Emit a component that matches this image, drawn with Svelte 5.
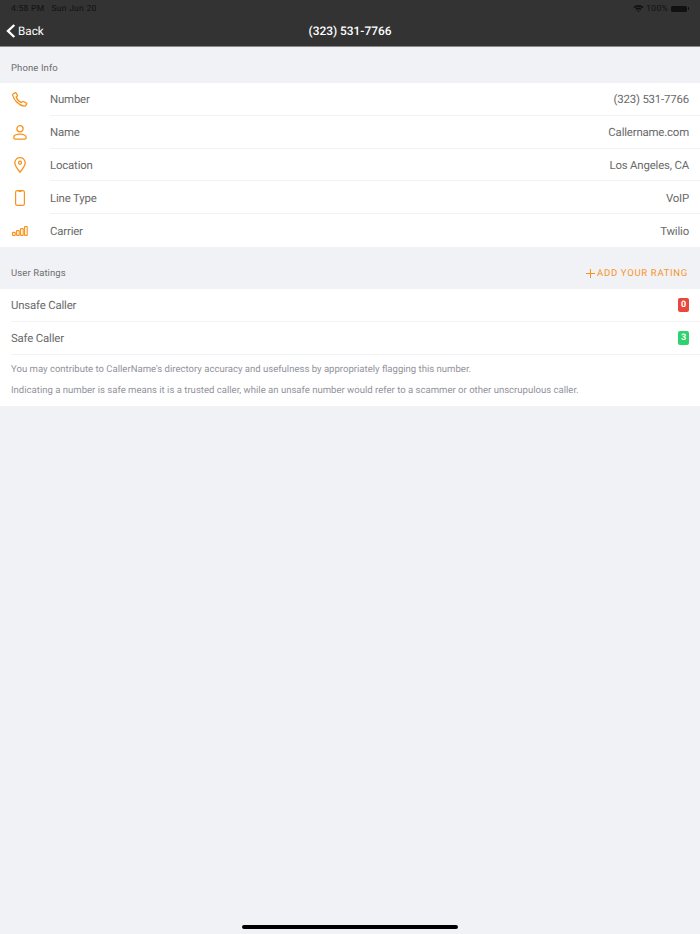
<script>
  const info = [
    { label: 'Number', value: '(323) 531-7766', icon: 'phone' },
    { label: 'Name', value: 'Callername.com', icon: 'user' },
    { label: 'Location', value: 'Los Angeles, CA', icon: 'pin' },
    { label: 'Line Type', value: 'VoIP', icon: 'mobile' },
    { label: 'Carrier', value: 'Twilio', icon: 'bars' }
  ];
  const ratings = [
    { label: 'Unsafe Caller', count: 0, tone: 'red' },
    { label: 'Safe Caller', count: 3, tone: 'green' }
  ];
</script>

<div class="page">
  <header class="nav">
    <div class="status">
      <span class="time">4:58 PM</span>
      <span class="date">Sun Jun 20</span>
      <span class="right">
        <svg class="wifi" width="11" height="9" viewBox="0 0 11 9">
          <path d="M0.4 3 A7.4 7.4 0 0 1 10.6 3 L9.4 4.2 A5.7 5.7 0 0 0 1.6 4.2 Z M2.4 5 A4.5 4.5 0 0 1 8.6 5 L7.4 6.2 A2.8 2.8 0 0 0 3.6 6.2 Z M4.3 7 A1.8 1.8 0 0 1 6.7 7 L5.5 8.3 Z" fill="#111" />
        </svg>
        <span class="pct">100%</span>
        <span class="battery"></span>
        <span class="tip"></span>
      </span>
    </div>
    <div class="bar">
      <div class="back">
        <svg width="10" height="14" viewBox="0 0 10 14">
          <path d="M8.3 1 L2 7 L8.3 13" fill="none" stroke="#fff" stroke-width="2.4" />
        </svg>
        <span>Back</span>
      </div>
      <div class="title">(323) 531-7766</div>
    </div>
  </header>

  <div class="section-head first">Phone Info</div>
  <section class="list">
    {#each info as row, i}
      <div class="row">
        <span class="icon">
          {#if row.icon === 'phone'}
            <svg width="16" height="15" viewBox="0 0 16 15" fill="none" stroke="#f7931e" stroke-width="1.3" stroke-linejoin="round">
              <path d="M1.2 1.9 L3.1 0.7 C3.5 0.5 3.9 0.6 4.1 1 L5.4 3.4 C5.6 3.8 5.5 4.1 5.2 4.3 L4.1 5 C4.9 7.3 6.9 9.6 9.5 10.6 L10.4 9.6 C10.7 9.3 11.1 9.3 11.4 9.5 L14.4 11.1 C14.8 11.3 14.9 11.7 14.7 12.1 L13.6 13.6 C13.3 14 12.8 14.3 12.2 14.2 C6.8 13.4 1.9 8.2 0.7 3.2 C0.6 2.7 0.8 2.2 1.2 1.9 Z" />
            </svg>
          {:else if row.icon === 'user'}
            <svg width="14" height="15" viewBox="0 0 14 15" fill="none" stroke="#f7931e" stroke-width="1.3">
              <circle cx="7" cy="3.8" r="3.1" />
              <path d="M0.8 12.3 C0.8 10.4 3.5 9.2 7 9.2 C10.5 9.2 13.2 10.4 13.2 12.3 C13.2 13.5 12.7 14.2 11.8 14.2 L2.2 14.2 C1.3 14.2 0.8 13.5 0.8 12.3 Z" />
            </svg>
          {:else if row.icon === 'pin'}
            <svg width="12" height="16" viewBox="0 0 12 16" fill="none" stroke="#f7931e" stroke-width="1.3">
              <path d="M6 15.2 C3.6 12.2 0.8 9 0.8 5.8 A5.2 5.2 0 0 1 11.2 5.8 C11.2 9 8.4 12.2 6 15.2 Z" />
              <circle cx="6" cy="5.7" r="1.5" />
            </svg>
          {:else if row.icon === 'mobile'}
            <svg width="10" height="16" viewBox="0 0 10 16" fill="none" stroke="#f7931e" stroke-width="1.2">
              <rect x="0.6" y="0.6" width="8.8" height="14.8" rx="1.6" />
              <path d="M3.4 1.4 H6.6" />
            </svg>
          {:else}
            <svg width="16" height="10" viewBox="0 0 16 10" fill="none" stroke="#f7931e" stroke-width="1.1">
              <rect x="0.6" y="6.4" width="2.6" height="3" rx="0.4" />
              <rect x="4.6" y="4.6" width="2.6" height="4.8" rx="0.4" />
              <rect x="8.6" y="2.6" width="2.6" height="6.8" rx="0.4" />
              <rect x="12.6" y="0.6" width="2.6" height="8.8" rx="0.4" />
            </svg>
          {/if}
        </span>
        <div class="cell" class:last={i === info.length - 1}>
          <span class="label">{row.label}</span>
          <span class="value">{row.value}</span>
        </div>
      </div>
    {/each}
  </section>

  <div class="section-head second">
    <span>User Ratings</span>
    <span class="add">
      <svg width="9" height="9" viewBox="0 0 9 9">
        <path d="M4.5 0 V9 M0 4.5 H9" stroke="#f7931e" stroke-width="1" />
      </svg>
      ADD YOUR RATING
    </span>
  </div>
  <section class="list ratings">
    {#each ratings as r}
      <div class="rating">
        <span class="label">{r.label}</span>
        <span class="badge {r.tone}">{r.count}</span>
      </div>
    {/each}
    <p class="note one">You may contribute to CallerName's directory accuracy and usefulness by appropriately flagging this number.</p>
    <p class="note two">Indicating a number is safe means it is a trusted caller, while an unsafe number would refer to a scammer or other unscrupulous caller.</p>
  </section>

  <div class="home"></div>
</div>

<style>
  :global(body) {
    margin: 0;
    background: #f1f2f6;
  }
  .page {
    position: relative;
    height: 934px;
    overflow: hidden;
    background: #f1f2f6;
    font-family: Roboto, "Liberation Sans", sans-serif;
    color: #666;
    text-rendering: geometricPrecision;
  }
  .nav {
    height: 46px;
    background: #333333;
    border-bottom: 1px solid #8a8a8a;
  }
  .status {
    display: flex;
    align-items: center;
    box-sizing: border-box;
    height: 16px;
    padding: 1px 11px 0;
    font-size: 8.5px;
    letter-spacing: 0.3px;
    color: #111;
  }
  .date {
    margin-left: 7px;
  }
  .right {
    margin-left: auto;
    display: flex;
    align-items: center;
    gap: 2px;
  }
  .battery {
    display: block;
    width: 16px;
    height: 6px;
    margin-left: 1px;
    background: #111;
    border-radius: 1.5px;
  }
  .tip {
    display: block;
    width: 1px;
    height: 3px;
    margin-left: -1px;
    background: #111;
  }
  .bar {
    position: relative;
    display: flex;
    align-items: center;
    justify-content: center;
    height: 30px;
  }
  .back {
    position: absolute;
    left: 6px;
    top: 0;
    height: 30px;
    display: flex;
    align-items: center;
    gap: 2px;
    color: #fff;
    font-size: 11.7px;
  }
  .title {
    color: #fff;
    font-size: 11.9px;
    font-weight: 500;
  }
  .section-head {
    display: flex;
    justify-content: space-between;
    align-items: center;
    padding: 0 12px 0 11px;
    font-size: 9.5px;
    color: #6e6e6e;
    letter-spacing: 0.1px;
    box-sizing: border-box;
  }
  .first {
    height: 36px;
    padding-top: 6px;
  }
  .second {
    height: 42px;
    padding-top: 11px;
  }
  .add {
    display: flex;
    align-items: center;
    gap: 2px;
    color: #f7931e;
    letter-spacing: 0.7px;
  }
  .list {
    background: #fff;
  }
  .row {
    display: flex;
    height: 32.8px;
  }
  .icon {
    flex: none;
    width: 39px;
    margin-right: 11px;
    display: flex;
    align-items: center;
    justify-content: center;
  }
  .cell {
    flex: 1;
    display: flex;
    justify-content: space-between;
    align-items: center;
    padding: 1px 11px 0 0;
    border-bottom: 1px solid #f1f2f5;
    min-width: 0;
  }
  .cell.last {
    border-bottom-color: transparent;
  }
  .label,
  .value {
    font-size: 11.4px;
    letter-spacing: -0.17px;
    color: #6a6a6a;
  }
  .rating {
    display: flex;
    justify-content: space-between;
    align-items: center;
    height: 30.8px;
    padding-top: 1px;
    margin-left: 11px;
    padding-right: 11px;
    border-bottom: 1px solid #f1f2f5;
  }
  .badge {
    display: flex;
    align-items: center;
    justify-content: center;
    width: 11px;
    height: 14px;
    border-radius: 2px;
    color: #fff;
    font-size: 9px;
    font-weight: 700;
  }
  .red {
    background: #e8483c;
  }
  .green {
    background: #2dd36f;
  }
  .note {
    margin: 0;
    padding: 0 11px;
    font-size: 9.55px;
    line-height: 12px;
    color: #92929c;
  }
  .one {
    padding-top: 9px;
  }
  .two {
    padding-top: 9.4px;
    padding-bottom: 9.5px;
  }
  .home {
    position: absolute;
    left: 242px;
    bottom: 5px;
    width: 216px;
    height: 4px;
    background: #000;
    border-radius: 2px;
  }
</style>
